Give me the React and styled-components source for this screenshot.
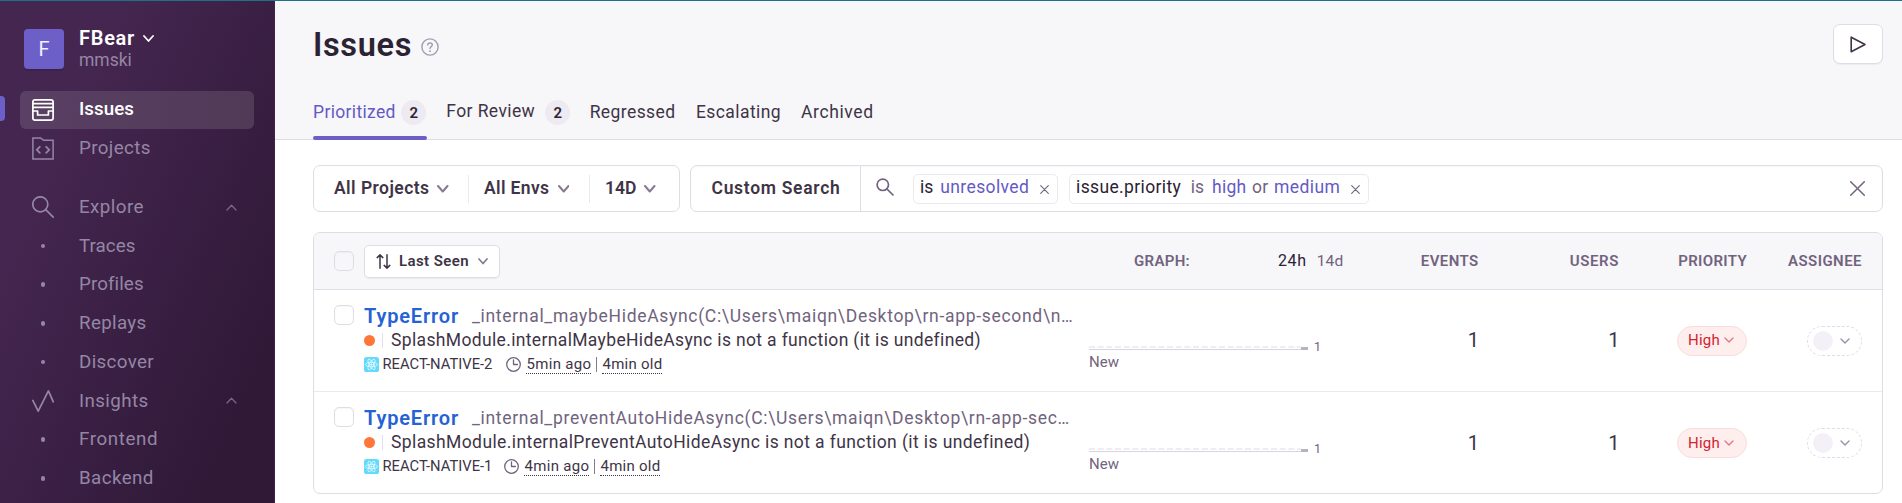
import React from 'react';
import styled, { createGlobalStyle, css } from 'styled-components';

const color = {
  heading: '#2b2233',
  text: '#3e3446',
  sub: '#71637e',
  purple: '#6c5fc7',
  link: '#6559c5',
  border: '#e0dce5',
  innerBorder: '#ebe9f0',
  surface: '#f7f6f9',
  nav: '#9586a5',
};

const GlobalStyle = createGlobalStyle`
  *, *::before, *::after { box-sizing: border-box; }
  html, body { margin: 0; height: 100%; overflow: hidden; }
  body {
    font-family: Roboto, "Liberation Sans", sans-serif;
    font-size: 17.5px;
    color: ${color.text};
    background: #fff;
  }
  svg { display: block; flex: none; }
`;

const Text = styled.span`
  display: inline-block;
  white-space: pre;
  font-size: ${p => p.$size || 17.5}px;
  font-weight: ${p => p.$weight || 400};
  letter-spacing: ${p => p.$track || 0}px;
  color: ${p => p.$color || 'inherit'};
  line-height: 1.2;
`;

/* ---------- icons ---------- */

const Svg = ({ w, h = w, sw = 1.5, children, ...rest }) => (
  <svg width={w} height={h} viewBox={`0 0 ${w} ${h}`} fill="none" stroke="currentColor"
    strokeWidth={sw} strokeLinecap="round" strokeLinejoin="round" {...rest}>{children}</svg>
);
const ChevronDown = ({ w = 11, h = 7, sw = 2 }) => (
  <Svg w={w} h={h} sw={sw}><path d={`M1 1L${w / 2} ${h - 1}L${w - 1} 1`} /></Svg>
);
const ChevronUp = () => (
  <Svg w={11} h={7} sw={1.3}><path d="M1 6L5.5 1.2L10 6" /></Svg>
);
const IssuesIcon = () => (
  <Svg w={22} sw={1.7}>
    <rect x="0.9" y="0.9" width="20.2" height="20.2" rx="2.2" />
    <path d="M1 4.7H21M1 8.3H21M1 12H5.6V16H16.4V12H21" />
  </Svg>
);
const ProjectsIcon = () => (
  <Svg w={22} h={23} sw={1.5} strokeLinejoin="miter">
    <path d="M.9 .9H8.6L11.6 3.3H21.1V22.1H.9Z" />
    <path d="M7.8 9.8L4.8 12.8L7.8 15.8M14.2 9.8L17.2 12.8L14.2 15.8" strokeWidth="1.8" />
  </Svg>
);
const SearchNavIcon = () => (
  <Svg w={22} sw={1.7}><circle cx="8.3" cy="8.3" r="7.5" /><path d="M13.7 13.7L21.2 21.2" /></Svg>
);
const InsightsIcon = () => (
  <Svg w={22} sw={1.7}><path d="M.8 10.4L6.2 21.2L16.4 .9L21.3 11.8" /></Svg>
);
const SearchIcon = () => (
  <Svg w={18} sw={1.7}><circle cx="6.8" cy="6.8" r="5.7" /><path d="M11 11L17 17" /></Svg>
);
const CloseIcon = ({ w, sw }) => (
  <Svg w={w} sw={sw}><path d={`M.7 .7L${w - 0.7} ${w - 0.7}M${w - 0.7} .7L.7 ${w - 0.7}`} /></Svg>
);
const HelpIcon = () => (
  <Svg w={18} sw={1.4}>
    <circle cx="9" cy="9" r="8.1" />
    <path d="M6.7 7.1C6.7 4.2 11.3 4.2 11.3 7.1C11.3 8.7 9 8.7 9 10.6" />
    <path d="M9 13.1V13.2" strokeWidth="1.8" />
  </Svg>
);
const PlayIcon = () => (
  <Svg w={17} sw={1.6}><path d="M1.2 1.2V15.8L15 8.5Z" /></Svg>
);
const SortIcon = () => (
  <Svg w={15} sw={1.5}>
    <path d="M4 14.2V1M1.2 3.6L4 .9L6.8 3.6M11 .8V14M8.2 11.4L11 14.1L13.8 11.4" />
  </Svg>
);
const ClockIcon = () => (
  <Svg w={15} sw={1.3}><circle cx="7.5" cy="7.5" r="6.8" /><path d="M7.5 3V7.5H11.4" /></Svg>
);
const ReactIcon = () => (
  <svg width="15" height="15" viewBox="0 0 15 15">
    <rect width="15" height="15" rx="2.6" fill="#61dafb" />
    <g fill="none" stroke="#fff" strokeWidth="0.7">
      <ellipse cx="7.5" cy="7.5" rx="5.9" ry="2.2" />
      <ellipse cx="7.5" cy="7.5" rx="5.9" ry="2.2" transform="rotate(60 7.5 7.5)" />
      <ellipse cx="7.5" cy="7.5" rx="5.9" ry="2.2" transform="rotate(120 7.5 7.5)" />
    </g>
    <circle cx="7.5" cy="7.5" r="1.1" fill="#fff" />
  </svg>
);

/* ---------- shell and sidebar ---------- */

const TopLine = styled.div`height: 1px; background: #1c7186;`;
const Shell = styled.div`display: flex; height: 502px;`;

const Sidebar = styled.nav`
  flex: none;
  width: 275px;
  height: 502px;
  overflow: hidden;
  color: ${color.nav};
  background: linear-gradient(294.17deg, #2f1937 14%, #452650 77%);
  border-right: 1px solid #3f2349;
`;
const Org = styled.div`display: flex; padding: 28px 0 0 24px; height: 90px;`;
const Avatar = styled.div`
  display: grid;
  place-items: center;
  width: 40px;
  height: 40px;
  border-radius: 4px;
  color: #f3f0ff;
  background: ${color.purple};
  box-shadow: 0 2px 0 rgba(43, 20, 55, 0.25);
`;
const OrgText = styled.div`display: flex; flex-direction: column; padding: 0 0 0 15px; margin-top: -4px;`;
const OrgName = styled.div`display: flex; align-items: center; gap: 8px; height: 25px; color: #fff;`;
const OrgChevron = styled.span`margin-top: 2px;`;

const NavList = styled.div`display: flex; flex-direction: column; gap: 1.25px;`;
const NavRow = styled.a`
  position: relative;
  display: flex;
  align-items: center;
  flex: none;
  height: 37.5px;
  margin: ${p => (p.$spaced ? 19.75 : 0)}px 20px 0;
  padding: 0 17px 0 12px;
  border-radius: 6px;
  ${p => p.$active && css`
    color: #fff;
    background: linear-gradient(90deg, #5a4064, #503a57);
    &::before {
      content: '';
      position: absolute;
      left: -20px;
      top: 5px;
      width: 5px;
      height: 25px;
      border-radius: 0 4px 4px 0;
      background: ${color.purple};
    }
  `}
`;
const NavIcon = styled.span`display: grid; place-items: center; width: 22px; margin-right: 25px;`;
const NavLabel = styled(Text)`flex: 1; margin-bottom: ${p => p.$lift}px;`;
const Bullet = styled.i`width: 4.5px; height: 4.5px; border-radius: 50%; background: currentColor;`;
const Faded = styled.span`opacity: 0.7;`;

const NAV = [
  { label: 'Issues', icon: <IssuesIcon />, active: true, weight: 500, track: 0.05 },
  { label: 'Projects', icon: <ProjectsIcon />, track: 0.38 },
  { label: 'Explore', icon: <SearchNavIcon />, spaced: true, open: true, track: 0.45 },
  { label: 'Traces', track: 0.06 },
  { label: 'Profiles', track: 0.09 },
  { label: 'Replays', track: 0.33 },
  { label: 'Discover', track: 0.35 },
  { label: 'Insights', icon: <InsightsIcon />, open: true, track: 0.4 },
  { label: 'Frontend', track: 0.6 },
  { label: 'Backend', track: 0.42 },
];

/* ---------- page header ---------- */

const Main = styled.main`flex: 1; min-width: 0;`;
const Header = styled.header`
  height: 139px;
  padding: 23px 19px 0 38px;
  background: ${color.surface};
  border-bottom: 1px solid ${color.border};
`;
const TitleRow = styled.div`display: flex; align-items: center; height: 40px; color: ${color.heading};`;
const Title = styled(Text)`margin: 2px 0 0;`;
const HelpSlot = styled.span`margin: 5px 0 0 9px; color: #a49cb0;`;
const Button = styled.button`
  display: flex;
  align-items: center;
  justify-content: center;
  padding: 0;
  font: inherit;
  color: ${color.text};
  background: #fff;
  border: 1px solid ${color.border};
  border-radius: ${p => p.$radius || 7}px;
  box-shadow: 0 1px 1px rgba(43, 34, 51, 0.05);
  width: ${p => p.$w}px;
  height: ${p => p.$h}px;
`;
const PlayButton = styled(Button)`margin-left: auto;`;

const Tabs = styled.div`display: flex; margin-top: 21px; height: 55px;`;
const Tab = styled.div`
  position: relative;
  display: flex;
  align-items: center;
  margin-right: ${p => p.$gap}px;
  color: ${p => (p.$active ? color.link : color.text)};
  ${p => p.$active && css`
    &::after {
      content: '';
      position: absolute;
      left: 0;
      right: -1px;
      bottom: 0;
      height: 4px;
      border-radius: 2px;
      background: ${color.purple};
    }
  `}
`;
const TabLabel = styled(Text)`margin-top: ${p => p.$shift || 0}px;`;
const Count = styled.span`
  display: grid;
  place-items: center;
  width: 25px;
  height: 25px;
  margin-left: ${p => p.$gap}px;
  border-radius: 50%;
  font-size: 15px;
  font-weight: 600;
  color: ${color.heading};
  background: #edeaf2;
`;

/* ---------- filters ---------- */

const Body = styled.div`padding: 25px 19px 0 38px;`;
const Filters = styled.div`display: flex; gap: 10px; height: 47px;`;
const Box = styled.div`
  display: flex;
  align-items: center;
  border: 1px solid ${color.border};
  border-radius: 7px;
  background: #fff;
`;
const PageFilters = styled(Box)`width: 367px; padding-left: 20px;`;
const FilterItem = styled.div`
  display: flex;
  align-items: center;
  gap: 8px;
  height: 28px;
  width: ${p => p.$w}px;
  margin-right: ${p => p.$gap || 0}px;
  border-right: ${p => (p.$gap ? `1px solid ${color.innerBorder}` : 0)};
`;
const Dim = styled.span`margin-top: 1px; color: #857a90;`;
const SearchBar = styled(Box)`
  flex: 1;
  height: 47px;
  box-shadow: inset 0 1px 2px rgba(43, 34, 51, 0.03);
`;
const SearchScope = styled.div`
  display: flex;
  align-items: center;
  width: 170px;
  height: 45px;
  padding-left: 20.5px;
  border-right: 1px solid ${color.border};
`;
const SearchGlyph = styled.span`margin: 0 19px 3px 15px; color: ${color.sub};`;
const Token = styled.div`
  display: flex;
  align-items: center;
  height: 30px;
  width: ${p => p.$w}px;
  margin-right: 11px;
  padding: 0 8.5px 2px 6px;
  border: 1px solid ${color.innerBorder};
  border-radius: 5px;
`;
const TokenPart = styled(Text)`margin-right: ${p => p.$gap}px;`;
const TokenClose = styled.span`margin: 3px 0 0 auto; color: ${color.sub};`;
const ClearSlot = styled.span`margin: 0 17px 0 auto; color: ${color.sub};`;

/* ---------- issue table ---------- */

const Panel = styled.section`
  height: 262px;
  margin-top: 20px;
  border: 1px solid ${color.border};
  border-radius: 7px;
  overflow: hidden;
`;
const gridRow = css`
  display: grid;
  grid-template-columns: 30px 725px 255px 134.5px 140.5px 128px 115px;
  padding-left: 20px;
`;
const HeadRow = styled.div`
  ${gridRow}
  align-items: center;
  height: 57px;
  background: ${color.surface};
  border-bottom: 1px solid ${color.border};
`;
const Row = styled.div`
  ${gridRow}
  height: 102px;
  border-bottom: 1px solid ${color.innerBorder};
  &:last-child { border-bottom: 0; }
`;
const Checkbox = styled.span`
  width: 20px;
  height: 20px;
  margin-top: ${p => p.$top || 0}px;
  border: 1.5px solid ${color.border};
  border-radius: 5px;
  box-shadow: inset 0 1px 2px rgba(43, 34, 51, 0.04);
`;
const SortLabel = styled(Text)`margin: 0 8.5px 0 7.5px;`;
const HeadText = styled(Text).attrs({ $size: 15, $weight: 600, $color: color.sub })`justify-self: end;`;
const GraphHead = styled.div`
  display: flex;
  align-items: center;
  padding-left: 45px;
`;
const Range = styled(Text)`margin-left: ${p => p.$gap}px;`;

const Summary = styled.div`display: flex; flex-direction: column; padding-top: 12.5px;`;
const Line = styled.div`display: flex; align-items: center; height: ${p => p.$h || 25}px;`;
const ErrorType = styled(Text)`margin-top: 1px;`;
const Culprit = styled(Text)`margin: 2px 0 0 13px;`;
const Dot = styled.i`width: 11px; height: 11px; border-radius: 50%; background: #ff7738;`;
const Bar = styled.i`width: 1px; height: 15px; margin: 0 8px 0 7px; background: #e6dcef;`;
const ShortId = styled(Text)`margin: 0 ${p => p.$after}px 0 3.5px;`;
const Age = styled(Text)`
  height: 18.5px;
  line-height: 18px;
  border-bottom: 1px dotted ${color.text};
`;
const AgeBar = styled.i`width: 1px; height: 15px; margin: 0 5px; background: #857a90;`;
const ClockSlot = styled.span`margin: 0 5px 0 0; color: ${color.sub};`;

const Chart = styled.div`padding-top: 49px;`;
const ChartTop = styled.div`
  display: flex;
  align-items: center;
  gap: 6px;
  height: 15px;
  & > svg { align-self: flex-end; margin-bottom: 3px; }
`;
const ChartNote = styled(Text)`display: block; line-height: 17px;`;
const Value = styled(Text).attrs({ $size: 20, $color: color.text })`
  align-self: center;
  justify-self: end;
  margin: 0 -0.5px 1px 0;
`;
const Pill = styled.span`
  display: flex;
  align-items: center;
  align-self: center;
  justify-self: end;
  width: ${p => p.$w}px;
  height: 30px;
  border-radius: 15px;
`;
const PriorityPill = styled(Pill)`
  gap: 4px;
  padding: 0 0 1px 10px;
  color: #df7682;
  background: #ffeeee;
  border: 1px solid #fbdcdc;
`;
const AssigneePill = styled(Pill)`
  justify-content: space-between;
  padding: 0 11px 0 5px;
  color: #9a90a8;
  border: 1px dashed ${color.border};
`;
const EmptyAvatar = styled.i`width: 20px; height: 20px; border-radius: 50%; background: #f3f1f7;`;

const ISSUES = [
  {
    culprit: '_internal_maybeHideAsync(C:\\Users\\maiqn\\Desktop\\rn-app-second\\n…', culpritTrack: 0.69,
    message: 'SplashModule.internalMaybeHideAsync is not a function (it is undefined)', track: 0.35,
    id: 'REACT-NATIVE-2', after: 14, seen: '5min ago',
  },
  {
    culprit: '_internal_preventAutoHideAsync(C:\\Users\\maiqn\\Desktop\\rn-app-sec…', culpritTrack: 0.69,
    message: 'SplashModule.internalPreventAutoHideAsync is not a function (it is undefined)', track: 0.4,
    id: 'REACT-NATIVE-1', after: 12, seen: '4min ago',
  },
];

const Sparkline = () => (
  <svg width="219" height="5" viewBox="0 0 219 5">
    <path d="M0 1H212" stroke="#efecf2" strokeWidth="2" strokeDasharray="6 2.67" />
    <rect x="0" y="3" width="219" height="1" fill="#d9d5e0" />
    <rect x="212" y="1" width="7" height="3" fill="#b9b3c1" />
  </svg>
);

const IssueRow = ({ issue }) => (
  <Row>
    <Checkbox $top={15} />
    <Summary>
      <Line>
        <ErrorType $size={20} $weight={600} $track={0.84} $color="#2562d4">TypeError</ErrorType>
        <Culprit $track={issue.culpritTrack} $color={color.sub}>{issue.culprit}</Culprit>
      </Line>
      <Line>
        <Dot />
        <Bar />
        <Text $track={issue.track}>{issue.message}</Text>
      </Line>
      <Line $h={24}>
        <ReactIcon />
        <ShortId $size={14.75} $track={0} $after={issue.after}>{issue.id}</ShortId>
        <ClockSlot><ClockIcon /></ClockSlot>
        <Age $size={15} $track={0.33}>{issue.seen}</Age>
        <AgeBar />
        <Age $size={15} $track={0.26}>4min old</Age>
      </Line>
    </Summary>
    <Chart>
      <ChartTop>
        <Sparkline />
        <Text $size={12.5} $color={color.sub}>1</Text>
      </ChartTop>
      <ChartNote $size={15} $color={color.sub}>New</ChartNote>
    </Chart>
    <Value>1</Value>
    <Value>1</Value>
    <PriorityPill $w={70}>
      <Text $size={15} $track={0.24} $color="#d2232f">High</Text>
      <ChevronDown w={10} h={6} sw={1.3} />
    </PriorityPill>
    <AssigneePill $w={55}>
      <EmptyAvatar />
      <ChevronDown w={10} h={6} sw={1.4} />
    </AssigneePill>
  </Row>
);

export default function App() {
  return (
    <>
      <GlobalStyle />
      <TopLine />
      <Shell>
        <Sidebar>
          <Org>
            <Avatar><Text $size={20}>F</Text></Avatar>
            <OrgText>
              <OrgName>
                <Text $size={20} $weight={600} $track={0.72}>FBear</Text>
                <OrgChevron><ChevronDown w={11} h={7} sw={1.8} /></OrgChevron>
              </OrgName>
              <Text $size={17.5}>mmski</Text>
            </OrgText>
          </Org>
          <NavList>
            {NAV.map(n => (
              <NavRow key={n.label} $active={n.active} $spaced={n.spaced}>
                <NavIcon>{n.icon || <Bullet />}</NavIcon>
                <NavLabel $size={18.75} $weight={n.weight} $track={n.track} $lift={n.active ? 2 : 0}>
                  {n.label}
                </NavLabel>
                {n.open && <Faded><ChevronUp /></Faded>}
              </NavRow>
            ))}
          </NavList>
        </Sidebar>

        <Main>
          <Header>
            <TitleRow>
              <Title as="h1" $size={32.5} $weight={600} $track={0.65}>Issues</Title>
              <HelpSlot><HelpIcon /></HelpSlot>
              <PlayButton $w={50} $h={40}><PlayIcon /></PlayButton>
            </TitleRow>
            <Tabs>
              <Tab $active $gap={20}>
                <TabLabel $track={0.34}>Prioritized</TabLabel>
                <Count $gap={5.5}>2</Count>
              </Tab>
              <Tab $gap={19.5}>
                <TabLabel $track={0.4} $shift={-3}>For Review</TabLabel>
                <Count $gap={10}>2</Count>
              </Tab>
              <Tab $gap={20.5}><TabLabel $track={0.4}>Regressed</TabLabel></Tab>
              <Tab $gap={20}><TabLabel $track={0.42}>Escalating</TabLabel></Tab>
              <Tab $gap={0}><TabLabel $track={0.6}>Archived</TabLabel></Tab>
            </Tabs>
          </Header>

          <Body>
            <Filters>
              <PageFilters>
                <FilterItem $w={135} $gap={15}>
                  <Text $weight={600} $track={0.44}>All Projects</Text>
                  <Dim><ChevronDown w={11.5} h={7.5} /></Dim>
                </FilterItem>
                <FilterItem $w={106} $gap={15}>
                  <Text $weight={600} $track={0.37}>All Envs</Text>
                  <Dim><ChevronDown w={11.5} h={7.5} /></Dim>
                </FilterItem>
                <FilterItem $w={60}>
                  <Text $weight={600}>14D</Text>
                  <Dim><ChevronDown w={11.5} h={7.5} /></Dim>
                </FilterItem>
              </PageFilters>
              <SearchBar>
                <SearchScope><Text $weight={600} $track={0.7}>Custom Search</Text></SearchScope>
                <SearchGlyph><SearchIcon /></SearchGlyph>
                <Token $w={145}>
                  <TokenPart $gap={7} $color={color.heading}>is</TokenPart>
                  <TokenPart $gap={0} $track={0.38} $color={color.link}>unresolved</TokenPart>
                  <TokenClose><CloseIcon w={9} sw={1.1} /></TokenClose>
                </Token>
                <Token $w={300}>
                  <TokenPart $gap={9.5} $track={0.37} $color={color.heading}>issue.priority</TokenPart>
                  <TokenPart $gap={8} $color={color.sub}>is</TokenPart>
                  <TokenPart $gap={5.5} $track={0.29} $color={color.link}>high</TokenPart>
                  <TokenPart $gap={5.5} $track={0.29} $color={color.sub}>or</TokenPart>
                  <TokenPart $gap={0} $track={0.4} $color={color.link}>medium</TokenPart>
                  <TokenClose><CloseIcon w={9} sw={1.1} /></TokenClose>
                </Token>
                <ClearSlot><CloseIcon w={15} sw={1.5} /></ClearSlot>
              </SearchBar>
            </Filters>

            <Panel>
              <HeadRow>
                <Checkbox />
                <Button $w={136} $h={33} $radius={5}>
                  <SortIcon />
                  <SortLabel $size={15} $weight={600} $track={0.41}>Last Seen</SortLabel>
                  <Dim><ChevronDown w={10} h={6.5} sw={1.7} /></Dim>
                </Button>
                <GraphHead>
                  <Text $size={15} $weight={600} $track={0.32} $color={color.sub}>GRAPH:</Text>
                  <Range $gap={88} $size={16} $track={0.6} $color={color.heading}>24h</Range>
                  <Range $gap={10} $size={15.5} $track={0.2} $color={color.sub}>14d</Range>
                </GraphHead>
                <HeadText $track={0.4}>EVENTS</HeadText>
                <HeadText $track={0.6}>USERS</HeadText>
                <HeadText $track={0.35}>PRIORITY</HeadText>
                <HeadText $track={0.45}>ASSIGNEE</HeadText>
              </HeadRow>
              {ISSUES.map(issue => <IssueRow key={issue.id} issue={issue} />)}
            </Panel>
          </Body>
        </Main>
      </Shell>
    </>
  );
}
